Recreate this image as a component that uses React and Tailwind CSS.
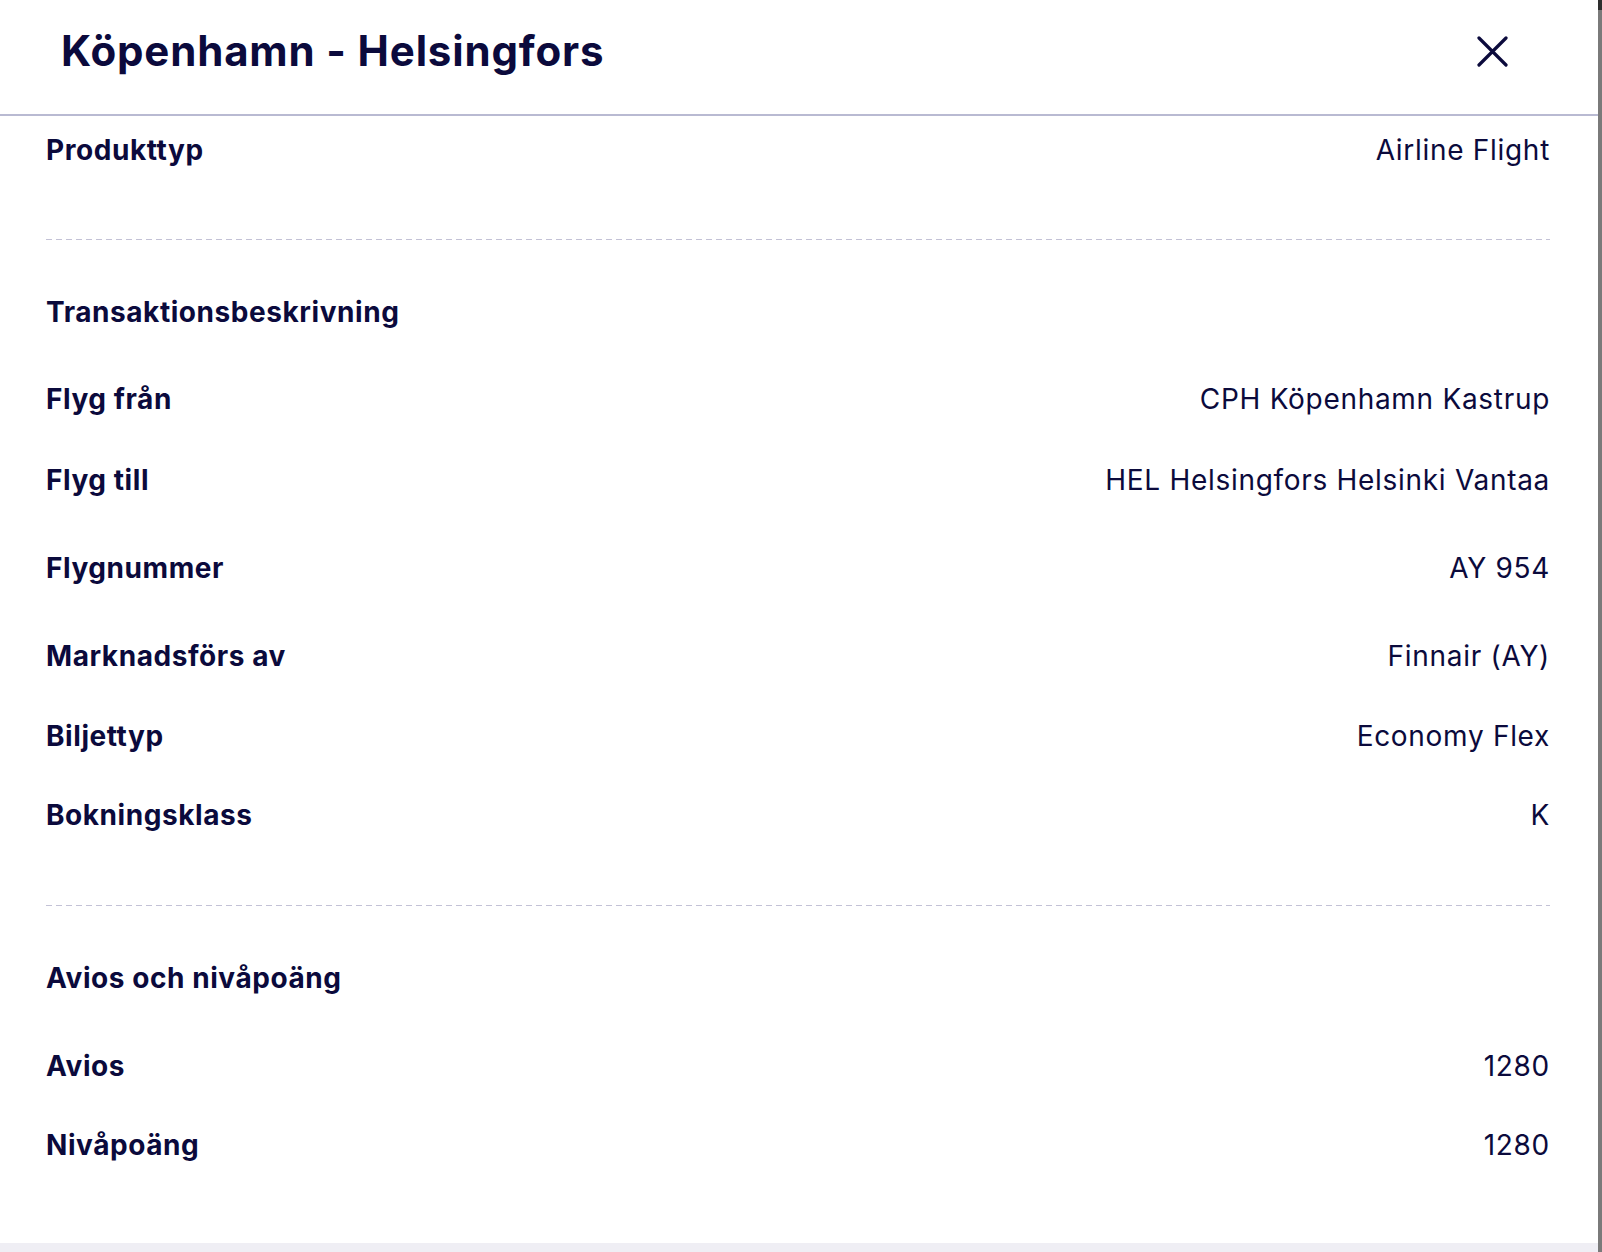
const ROWS_1 = [
  { label: 'Flyg från', value: 'CPH Köpenhamn Kastrup', gap: 'mt-[51px]' },
  { label: 'Flyg till', value: 'HEL Helsingfors Helsinki Vantaa', gap: 'mt-[45px]' },
  { label: 'Flygnummer', value: 'AY 954', gap: 'mt-[52px]' },
  { label: 'Marknadsförs av', value: 'Finnair (AY)', gap: 'mt-[52px]' },
  { label: 'Biljettyp', value: 'Economy Flex', gap: 'mt-[44px]' },
  { label: 'Bokningsklass', value: 'K', gap: 'mt-[43px]' },
]

const ROWS_2 = [
  { label: 'Avios', value: '1280', gap: 'mt-[52px]' },
  { label: 'Nivåpoäng', value: '1280', gap: 'mt-[43px]' },
]

function Row({ label, value, gap }) {
  return (
    <div className={`flex items-center justify-between h-[36px] ${gap}`}>
      <span className="font-bold tracking-[0.02em]">{label}</span>
      {value && <span className="font-normal tracking-[0.025em]">{value}</span>}
    </div>
  )
}

function Dashed({ gap }) {
  return (
    <div className={`h-px bg-[linear-gradient(to_right,#c3c2d6_6px,transparent_6px)] bg-[length:10px_1px] ${gap}`} />
  )
}

function CloseIcon() {
  return (
    <svg width="31" height="31" viewBox="0 0 31 31" fill="none" stroke="#0b0a3c" strokeWidth="3.2" strokeLinecap="round">
      <path d="M2 2 L29 29 M29 2 L2 29" />
    </svg>
  )
}

export default function App() {
  return (
    <div className="flex h-[1252px] w-[1602px] bg-white text-[#0b0a3c] font-['Inter','Noto_Sans',sans-serif] overflow-hidden">
      <div className="flex flex-col flex-1 min-w-0">

        {/* Header */}
        <div className="h-[116px] shrink-0 border-b-2 border-[#b9bad2] pb-[12px] pl-[61px] pr-[90px] flex items-center justify-between">
          <h1 className="text-[42px] leading-[50px] font-bold tracking-[0.02em]">Köpenhamn - Helsingfors</h1>
          <button className="w-[31px] h-[31px] flex items-center justify-center">
            <CloseIcon />
          </button>
        </div>

        {/* Body */}
        <div className="flex-1 pl-[46px] pr-[48px] text-[28px] leading-[36px]">
          <Row label="Produkttyp" value="Airline Flight" gap="mt-[16px]" />
          <Dashed gap="mt-[71px]" />

          <Row label="Transaktionsbeskrivning" gap="mt-[54px]" />
          {ROWS_1.map(r => <Row key={r.label} {...r} />)}
          <Dashed gap="mt-[72px]" />

          <Row label="Avios och nivåpoäng" gap="mt-[54px]" />
          {ROWS_2.map(r => <Row key={r.label} {...r} />)}
        </div>

        <div className="h-[9px] shrink-0 bg-[#efeef4]" />
      </div>

      {/* scrollbar strip */}
      <div className="w-[4px] shrink-0 bg-[#7a7a7a] flex flex-col">
        <div className="h-[10px] bg-[#2e2e2e]" />
      </div>
    </div>
  )
}
